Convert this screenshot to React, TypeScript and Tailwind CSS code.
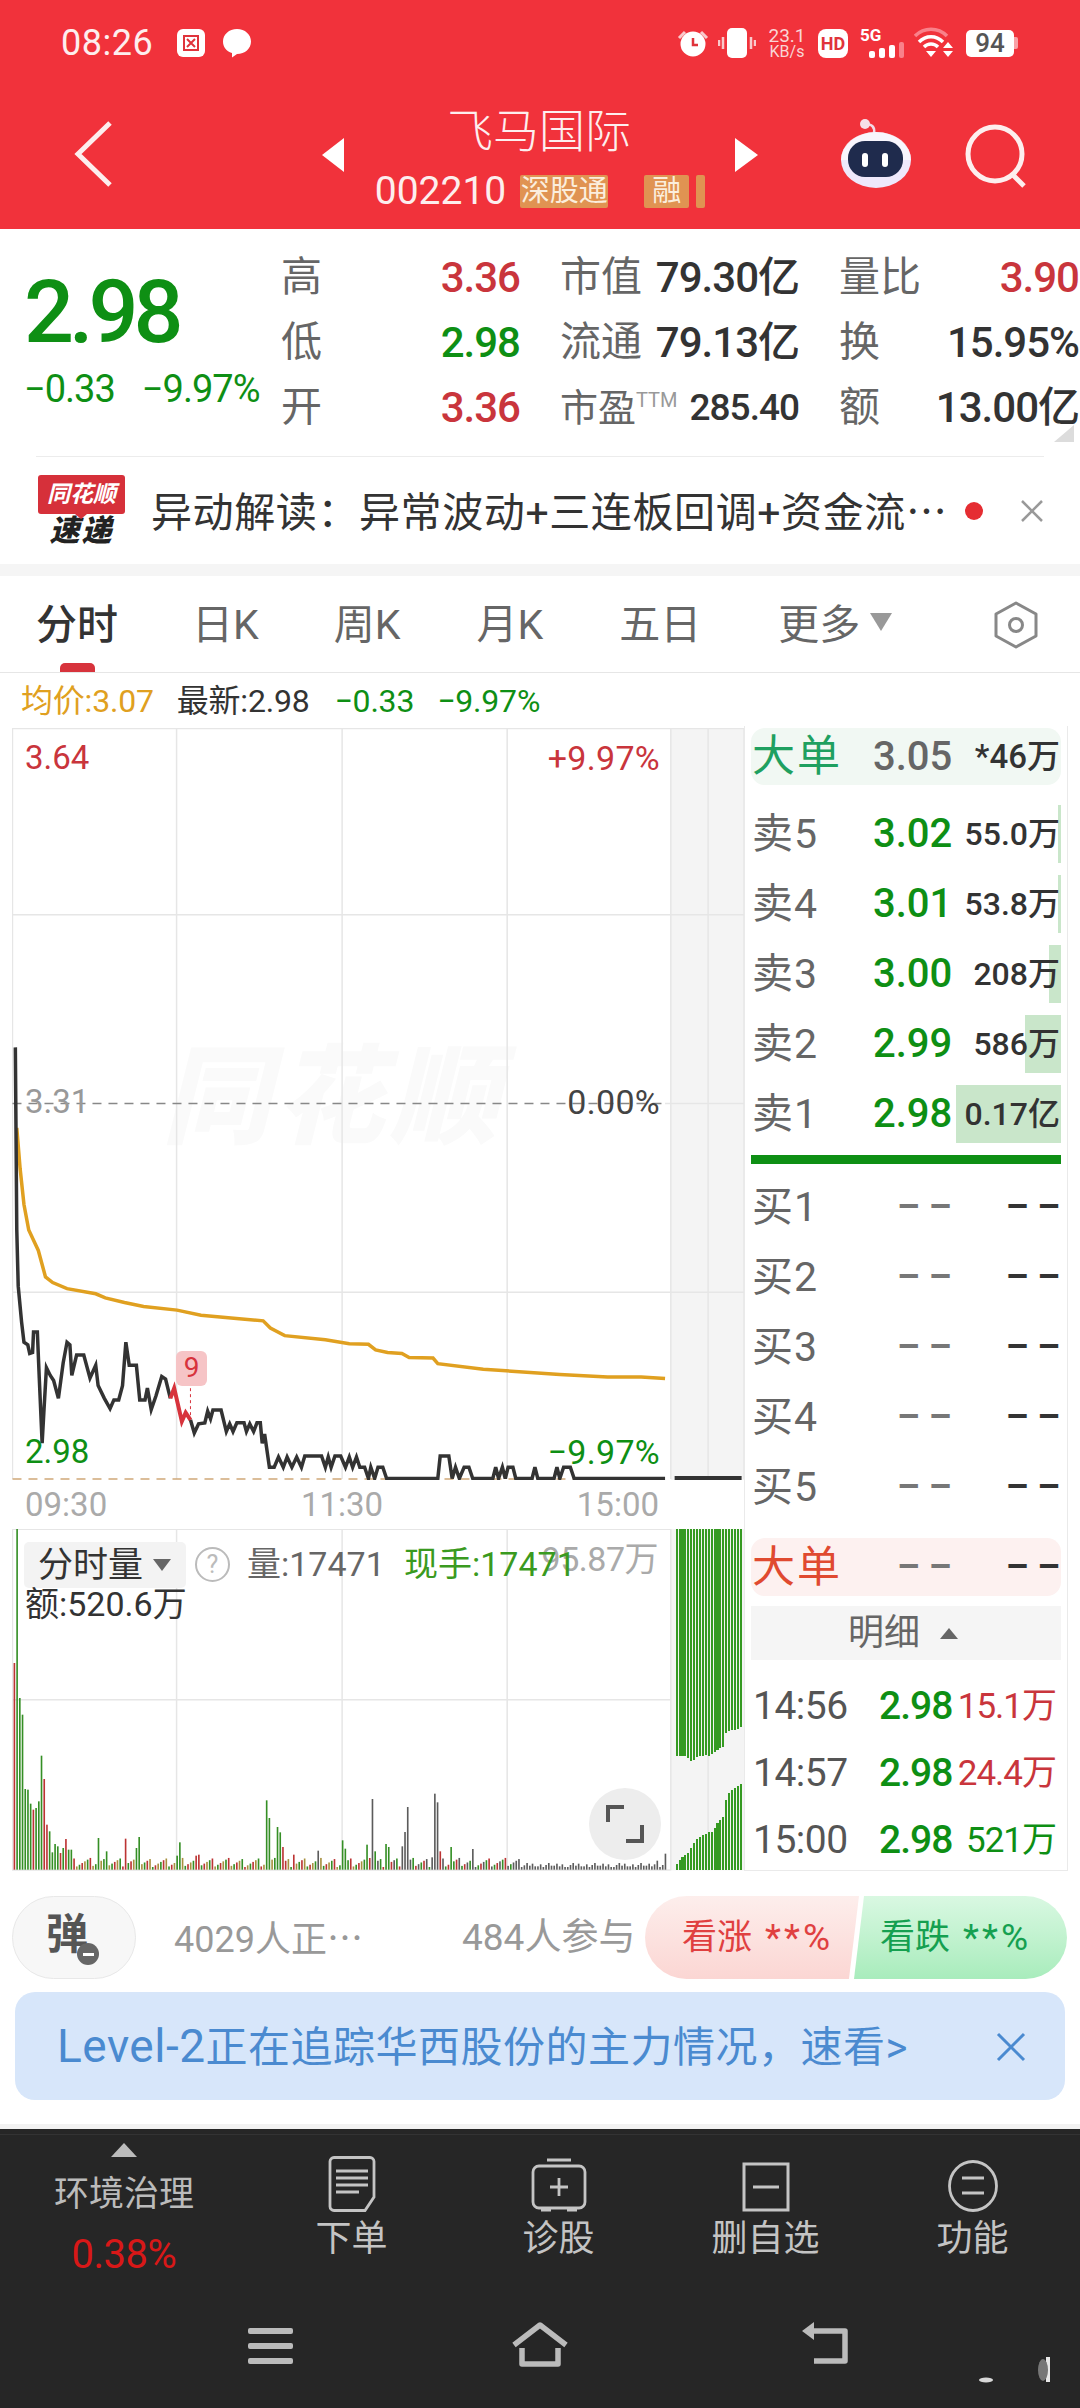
import React from 'react';

const GREEN = 'text-[#0e8f14]';
const RED = 'text-[#c9353c]';

const pricePts: number[][] = [[32,642],[35,1000],[38,1110],[45,1180],[50,1220],[58,1225],[62,1242],[68,1240],[70,1200],[78,1200],[82,1290],[88,1418],[92,1350],[97,1270],[105,1285],[112,1295],[122,1330],[132,1260],[140,1220],[146,1225],[150,1285],[160,1245],[175,1245],[188,1290],[200,1265],[205,1305],[218,1330],[230,1350],[238,1333],[248,1333],[256,1305],[263,1220],[270,1265],[285,1265],[292,1333],[303,1333],[308,1310],[316,1352],[326,1325],[338,1287],[346,1292],[356,1330]];
const redPts: number[][] = [[356,1330],[364,1310],[380,1375],[388,1358],[398,1372]];
const pricePts2: number[][] = [[398,1372],[406,1398],[415,1380],[428,1378],[434,1355],[440,1370],[445,1353],[462,1353],[473,1395],[480,1380],[487,1395],[495,1378],[510,1378],[515,1395],[522,1380],[530,1395],[537,1378],[544,1378],[548,1418],[553,1400],[563,1465],[573,1465],[582,1445],[592,1465],[600,1445],[610,1465],[620,1445],[630,1465],[637,1443],[672,1443],[680,1465],[686,1445],[692,1465],[700,1443],[712,1443],[722,1465],[730,1445],[737,1465],[745,1445],[752,1465],[762,1465],[770,1487],[775,1465],[783,1487],[790,1465],[800,1465],[808,1487],[915,1487],[920,1443],[938,1443],[945,1487],[952,1465],[960,1487],[970,1465],[980,1465],[988,1487],[1030,1487],[1036,1465],[1042,1487],[1050,1465],[1056,1487],[1062,1465],[1072,1465],[1078,1487],[1112,1487],[1118,1465],[1124,1487],[1158,1487],[1164,1465],[1170,1487],[1178,1465],[1192,1465],[1200,1487],[1390,1487]];
const avgPts: number[][] = [[35,800],[42,880],[50,950],[60,1000],[80,1040],[95,1092],[110,1103],[140,1115],[200,1125],[220,1133],[260,1142],[300,1150],[370,1157],[420,1167],[500,1174],[550,1178],[565,1192],[595,1207],[680,1215],[730,1223],[770,1224],[785,1235],[810,1240],[840,1242],[855,1250],[905,1251],[915,1262],[1010,1273],[1170,1283],[1270,1288],[1340,1288],[1390,1291]];

const pts = (p: number[][]) => p.map(([x, y]) => `${x},${y}`).join(' ');

const VG = '#358f25';
const VR = '#bc3434';
const VK = '#5c5c5c';

const spikes: [number, number, string][] = [[30,490,VR],[37,88,VG],[43,595,VG],[48,645,VG],[54,868,VG],[60,870,VG],[66,912,VG],[72,930,VR],[78,925,VG],[83,905,VG],[88,768,VG],[94,838,VR],[100,975,VR],[105,995,VG],[111,1058,VG],[117,1033,VG],[122,1040,VG],[128,1060,VR],[134,1045,VG],[139,1018,VR],[145,1050,VG],[150,1050,VG],[207,1015,VG],[222,1055,VG],[264,1017,VR],[287,1045,VG],[292,1012,VG],[372,1068,VG],[378,1028,VG],[410,1068,VR],[417,1065,VR],[558,902,VG],[564,955,VG],[580,982,VG],[586,998,VG],[592,1042,VR],[615,1065,VR],[667,1053,VK],[717,1022,VG],[723,1047,VG],[768,1035,VG],[774,1075,VR],[780,898,VK],[786,1055,VG],[808,1033,VG],[813,1042,VG],[842,1040,VK],[848,997,VK],[853,922,VK],[904,1073,VK],[910,882,VK],[915,908,VK],[921,1055,VR],[943,1042,VG],[989,1048,VK],[1373,1083,VK],[1390,1062,VK]];

const volumeBars = Array.from({ length: 241 }, (_, i) => {
    const x = 30 + i * 5.67;
    const seed = (i * 37) % 17;
    const h = x > 1100 ? 8 + (seed % 7) * 2 : 8 + seed * 1.7;
    const pick = (i * 7) % 3;
    const color = x > 1070 ? VK : pick === 0 ? VG : pick === 1 ? VR : x > 780 ? VK : '#a8903f';
    return { x, top: 1110 - h, color };
});
spikes.forEach(([x, top, color]) => {
    const i = Math.round((x - 30) / 5.67);
    volumeBars[i] = { x: volumeBars[i].x, top, color };
});

const sideTop = [770,768,768,770,775,785,780,772,770,768,767,770,762,757,752,745,742,700,695,692,690,688,683];
const sideBottom = [1092,1080,1072,1066,1060,1045,1030,1018,1012,1006,1002,998,996,985,970,960,952,900,880,872,866,858,852];

const Stat = ({ label, value, color = 'text-[#333]', labelClass = '' }: { label: React.ReactNode; value: string; color?: string; labelClass?: string }) => (
    <div className="flex items-center justify-between h-[65px]">
        <span className={`text-[41px] text-[#666] leading-none ${labelClass}`}>{label}</span>
        <span className={`text-[42px] font-medium tracking-[-1px] leading-none ${color}`}>{value}</span>
    </div>
);

const SellRow = ({ n, price, vol, bar }: { n: number; price: string; vol: string; bar: number }) => (
    <div className="relative flex items-center h-[70px]">
        <div className="absolute right-0 top-[6px] h-[58px] bg-[#c9e6ca]" style={{ width: bar }} />
        <span className="relative w-[122px] pl-[1px] text-[41px] tracking-[1px] text-[#666] leading-none">卖{n}</span>
        <span className={`relative text-[40px] font-medium leading-none ${GREEN}`}>{price}</span>
        <span className="relative ml-auto pr-[1px] text-[32px] font-medium text-[#333] leading-none">{vol}</span>
    </div>
);

const Dashes = ({ color }: { color: string }) => (
    <span className={`text-[36px] font-bold leading-none ${color}`}>– –</span>
);

const BuyRow = ({ n }: { n: number }) => (
    <div className="flex items-center h-[70px]">
        <span className="w-[146px] pl-[1px] text-[41px] tracking-[1px] text-[#666] leading-none">买{n}</span>
        <Dashes color="text-[#777]" />
        <span className="ml-auto pr-[1px]"><Dashes color="text-[#333]" /></span>
    </div>
);

const Tick = ({ time, vol, volColor }: { time: string; vol: string; volColor: string }) => (
    <div className="flex items-center h-[67px]">
        <span className="w-[128px] pl-[2px] text-[39px] text-[#555] leading-none tracking-[-0.5px]">{time}</span>
        <span className={`text-[39px] font-medium leading-none tracking-[-1px] ${GREEN}`}>2.98</span>
        <span className={`ml-auto pr-[5px] text-[35px] leading-none tracking-[-1px] ${volColor}`}>{vol}</span>
    </div>
);

const NavItem = ({ label, children }: { label: string; children: React.ReactNode }) => (
    <div className="w-[207px] flex flex-col items-center pt-[19px]">
        <div className="h-[58px] flex items-end justify-center">{children}</div>
        <span className="mt-[5px] text-[36px] text-[#c4c4c4] leading-[44px]">{label}</span>
    </div>
);

export default function App() {
    return (
        <div lang="zh-CN" className="w-[1080px] h-[2408px] overflow-hidden bg-white flex flex-col relative font-[Roboto,'Noto_Sans_CJK_SC',sans-serif]">
            {/* red header */}
            <div className="h-[229px] bg-[#f1323b] text-white shrink-0 flex flex-col">
                <div className="h-[84px] flex items-center pl-[61px] pr-[62px] pt-[2px]">
                    <span className="text-[36px] leading-none tracking-[0.5px] text-[#fdeeee]">08:26</span>
                    <svg width="28" height="28" viewBox="0 0 28 28" className="ml-[24px]">
                        <rect width="28" height="28" rx="6" fill="#fff" />
                        <path d="M7 7h14v14H7z M10 10l8 8M18 10l-8 8" stroke="#e0333b" strokeWidth="2" fill="none" />
                    </svg>
                    <svg width="30" height="30" viewBox="0 0 30 30" className="ml-[17px]">
                        <path d="M15 1c8 0 14 5.500 14 12.500S23 26 15 26l-5 3.500 0-4.500C4 23 1 19 1 13.500 1 6.500 7 1 15 1Z" fill="#fff" />
                    </svg>
                    <div className="ml-auto flex items-center">
                        <svg width="34" height="28" viewBox="0 0 34 28">
                            <circle cx="17" cy="15" r="12.500" fill="#fff" />
                            <path d="M17 9v7h5" stroke="#e0333b" strokeWidth="2.500" fill="none" />
                            <path d="M3 9l6-6M31 9l-6-6" stroke="#f9c9cb" strokeWidth="3" />
                        </svg>
                        <svg width="38" height="30" viewBox="0 0 38 30" className="ml-[8px]">
                            <rect x="9" y="0" width="20" height="30" rx="5" fill="#fff" />
                            <path d="M5 9v12M1 12v6M33 9v12M37 12v6" stroke="#f9c9cb" strokeWidth="2.500" />
                        </svg>
                        <div className="ml-[11px] w-[40px] flex flex-col items-center text-[#f9d5d6] font-[Roboto]">
                            <span className="text-[19px] leading-[17px]">23.1</span>
                            <span className="text-[16px] leading-[15px]">KB/s</span>
                        </div>
                        <div className="ml-[11px] w-[30px] h-[29px] rounded-[8px] bg-[#fff] text-[#e0333b] text-[18px] font-bold leading-[29px] text-center">HD</div>
                        <div className="relative ml-[12px] w-[44px] h-[30px]">
                            <span className="absolute left-0 top-[-2px] text-[17px] font-bold leading-[18px]">5G</span>
                            <svg width="36" height="16" viewBox="0 0 36 16" className="absolute left-[9px] bottom-0">
                                <rect x="0" y="9" width="6" height="7" rx="2" fill="#fff" />
                                <rect x="10" y="6" width="6" height="10" rx="2" fill="#fff" />
                                <rect x="20" y="3" width="6" height="13" rx="2" fill="#fff" />
                                <rect x="30" y="0" width="5" height="16" rx="2" fill="#f9818a" />
                            </svg>
                        </div>
                        <svg width="40" height="32" viewBox="0 0 40 32" className="ml-[10px]">
                            <path d="M1 9c9-9 23-9 32 0" stroke="#f9818a" strokeWidth="3.500" fill="none" />
                            <path d="M5 15c7-7 17-7 24 0M10 20c4-4 10-4 14 0" stroke="#fff" strokeWidth="3.500" fill="none" />
                            <path d="M17 30l-5-6h10zM34 15l5 6h-10zM34 30l5-6h-10z" fill="#fff" />
                        </svg>
                        <div className="relative ml-[12px] w-[48px] h-[27px] rounded-[5px] bg-white text-[#555] text-[26px] font-medium leading-[27px] text-center">94</div>
                        <div className="w-[4px] h-[12px] rounded-r-[2px] bg-[#f9a0a6]" />
                    </div>
                </div>
                <div className="relative flex-1">
                    <svg width="40" height="66" viewBox="0 0 40 66" className="absolute left-[74px] top-[37px]">
                        <path d="M36 2L4 33l32 31" stroke="#fdeeee" strokeWidth="5" fill="none" />
                    </svg>
                    <div className="absolute left-[322px] top-[54px] w-0 h-0 border-y-[17px] border-y-transparent border-r-[22px] border-r-white" />
                    <div className="absolute left-[735px] top-[54px] w-0 h-0 border-y-[17px] border-y-transparent border-l-[23px] border-l-white" />
                    <div className="flex flex-col items-center w-[1080px] pt-[20px]">
                        <span className="text-[46px] leading-[54px] font-light text-[#fdeeee] -ml-[2px]">飞马国际</span>
                        <div className="flex items-center mt-[16px] h-[34px] ml-[0px]">
                            <span className="text-[39px] leading-none tracking-[0px] text-[#fdeeee]">002210</span>
                            <span className="ml-[14px] w-[88px] h-[33px] rounded-[2px] bg-[#e09352] text-[29px] leading-[33px] text-center text-[#fbeedd]">深股通</span>
                            <span className="ml-[36px] w-[45px] h-[33px] rounded-[2px] bg-[#e09352] text-[29px] leading-[33px] text-center text-[#fbeedd]">融</span>
                            <span className="ml-[7px] w-[9px] h-[33px] rounded-[2px] bg-[#e09352]" />
                        </div>
                    </div>
                    {/* assistant robot */}
                    <svg width="76" height="72" viewBox="0 0 76 72" className="absolute left-[838px] top-[32px]">
                        <path d="M36 17c1-6-2-9-9-9" stroke="#f2d9e6" strokeWidth="2.500" fill="none" />
                        <circle cx="27" cy="8" r="5" fill="#f6dfe8" />
                        <ellipse cx="38" cy="44" rx="35" ry="28" fill="#eee8fb" />
                        <path d="M3 44c0-16 15-28 35-28s35 12 35 28" fill="#ffffff" opacity="0.6" />
                        <rect x="10" y="25" width="55" height="36" rx="17" fill="#1f2b4d" />
                        <rect x="24" y="37" width="6" height="14" rx="3" fill="#fff" />
                        <rect x="44" y="37" width="6" height="14" rx="3" fill="#fff" />
                    </svg>
                    <svg width="66" height="66" viewBox="0 0 66 66" className="absolute left-[962px] top-[39px]">
                        <circle cx="33" cy="31" r="27" stroke="#fdeeee" strokeWidth="5" fill="none" />
                        <path d="M50 51l12 12" stroke="#fdeeee" strokeWidth="5" />
                    </svg>
                </div>
            </div>

            {/* quote summary */}
            <div className="relative h-[227px] flex shrink-0 border-b-0">
                <div className="w-[281px] pl-[24px] pt-[39px]">
                    <div className={`text-[88px] font-medium leading-[88px] tracking-[-5px] ${GREEN}`}>2.98</div>
                    <div className={`mt-[15px] flex text-[38px] leading-[36px] tracking-[-1px] ${GREEN}`}>
                        <span>−0.33</span>
                        <span className="ml-[27px]">−9.97%</span>
                    </div>
                </div>
                <div className="w-[797px] pt-[16px] grid grid-cols-[239px_239px_240px] content-start gap-x-[40px]">
                    <Stat label="高" value="3.36" color={RED} />
                    <Stat label="市值" value="79.30亿" />
                    <Stat label="量比" value="3.90" color={RED} />
                    <Stat label="低" value="2.98" color={GREEN} />
                    <Stat label="流通" value="79.13亿" />
                    <Stat label="换" value="15.95%" />
                    <Stat label="开" value="3.36" color={RED} />
                    <div className="flex items-center justify-between h-[65px]">
                        <span className="text-[38px] text-[#666] leading-none">市盈<span className="text-[20px] align-super text-[#999]">TTM</span></span>
                        <span className="text-[37px] font-medium tracking-[-1px] leading-none text-[#333]">285.40</span>
                    </div>
                    <Stat label="额" value="13.00亿" />
                </div>
                <div className="absolute left-[1054px] top-[196px] w-0 h-0 border-b-[17px] border-b-[#dcdcdc] border-l-[20px] border-l-transparent" />
            </div>

            {/* news strip */}
            <div className="mx-[36px] h-px bg-[#ececec] shrink-0" />
            <div className="h-[107px] shrink-0 flex items-center pl-[38px]">
                <div className="w-[87px] h-[72px] flex flex-col items-center">
                    <div className="relative w-[87px] h-[39px] rounded-[3px] bg-[#d6303a] text-white text-[23px] font-bold italic leading-[39px] text-center">
                        同花顺
                        <div className="absolute left-[37px] top-[39px] w-0 h-0 border-x-[6px] border-x-transparent border-t-[5px] border-t-[#d6303a]" />
                    </div>
                    <span className="text-[30px] font-black italic leading-[34px] tracking-[2px] text-[#222]">速递</span>
                </div>
                <span className="ml-[26px] w-[814px] shrink-0 text-[41px] leading-[48px] tracking-[0.6px] text-[#333] whitespace-nowrap">异动解读：异常波动+三连板回调+资金流<span className="font-['Noto_Sans_CJK_SC'] tracking-normal">…</span></span>
                <span className="w-[18px] h-[18px] rounded-full bg-[#e52d32] shrink-0" />
                <svg width="24" height="24" viewBox="0 0 24 24" className="ml-[37px] shrink-0">
                    <path d="M2 2l20 20M22 2L2 22" stroke="#999" strokeWidth="2.500" />
                </svg>
            </div>
            <div className="h-[12px] bg-[#f5f5f5] shrink-0" />

            {/* period tabs */}
            <div className="relative h-[97px] shrink-0 flex items-center pl-[36px] pt-[2px] border-b border-[#e6e6e6] text-[41px] leading-none text-[#666]">
                <span className="font-medium text-[#333]">分时</span>
                <span className="ml-[74px]">日K</span>
                <span className="ml-[75px]">周K</span>
                <span className="ml-[76px]">月K</span>
                <span className="ml-[76px]">五日</span>
                <span className="ml-[77px]">更多</span>
                <span className="ml-[10px] w-0 h-0 border-x-[11px] border-x-transparent border-t-[18px] border-t-[#999] -mt-[6px]" />
                <svg width="48" height="48" viewBox="0 0 48 48" className="ml-[100px]">
                    <path d="M24 2L44 13V35L24 46L4 35V13Z" stroke="#888" strokeWidth="3" fill="none" strokeLinejoin="round" />
                    <circle cx="24" cy="24" r="6.500" stroke="#888" strokeWidth="3" fill="none" />
                </svg>
                <div className="absolute left-[60px] bottom-0 w-[35px] h-[9px] rounded-t-[5px] bg-[#d7333c]" />
            </div>

            {/* average / latest legend */}
            <div className="h-[55px] shrink-0 flex items-center pl-[21px] text-[32px] leading-none tracking-[-0.2px]">
                <span className="text-[#e0a020]">均价:3.07</span>
                <span className="ml-[23px] text-[#333]">最新:2.98</span>
                <span className={`ml-[25px] ${GREEN}`}>−0.33</span>
                <span className={`ml-[23px] ${GREEN}`}>−9.97%</span>
            </div>

            <div className="flex">
                <div className="w-[744px] pl-[12px]">
                    {/* intraday chart */}
                    <div className="relative w-[732px] h-[752px] text-[33px] leading-none">
                        <div className="absolute left-[150px] top-[316px] text-[108px] font-black italic leading-none tracking-[6px] text-[#fafafa]">同花顺</div>
                        <svg width="732" height="752" viewBox="25 16 1530 1474" preserveAspectRatio="none" className="absolute inset-0">
                            <rect x="1402" y="16" width="153" height="1474" fill="#f4f4f4" />
                            <g stroke="#e6e6e6" strokeWidth="1.500" vectorEffect="non-scaling-stroke" fill="none">
                                <path d="M26 16V1488M369 16V1488M715 16V1488M1060 16V1488M1402 16V1488M1480 16V1488M1555 16V1488" vectorEffect="non-scaling-stroke" />
                                <path d="M25 17H1555M25 382H1555M1390 752H1555M25 1122H1555" vectorEffect="non-scaling-stroke" />
                            </g>
                            <path d="M26 752H1392" stroke="#888" strokeWidth="1.500" strokeDasharray="9 7" vectorEffect="non-scaling-stroke" />
                            <path d="M26 1488H1392" stroke="#d0a878" strokeWidth="1.500" strokeDasharray="9 7" vectorEffect="non-scaling-stroke" />
                            <polyline points={pts(avgPts)} stroke="#e0a020" strokeWidth="3.500" fill="none" vectorEffect="non-scaling-stroke" />
                            <polyline points={pts(pricePts)} stroke="#333" strokeWidth="3.500" fill="none" vectorEffect="non-scaling-stroke" />
                            <polyline points={pts(pricePts2)} stroke="#333" strokeWidth="3.500" fill="none" vectorEffect="non-scaling-stroke" />
                            <polyline points={pts(redPts)} stroke="#d7333c" strokeWidth="4" fill="none" vectorEffect="non-scaling-stroke" />
                            <path d="M398 1310V1372" stroke="#d7333c" strokeWidth="1" strokeDasharray="3 3" vectorEffect="non-scaling-stroke" />
                            <path d="M1410 1488H1550" stroke="#333" strokeWidth="6" vectorEffect="non-scaling-stroke" />
                        </svg>
                        <span className={`absolute left-[13px] top-[13px] ${RED}`}>3.64</span>
                        <span className={`absolute right-[84px] top-[13px] text-[34px] tracking-[0.3px] ${RED}`}>+9.97%</span>
                        <span className="absolute left-[13px] top-[357px] text-[#999]">3.31</span>
                        <span className="absolute right-[84px] top-[357px] text-[34px] tracking-[0.3px] text-[#444]">0.00%</span>
                        <span className={`absolute left-[13px] top-[707px] ${GREEN}`}>2.98</span>
                        <span className={`absolute right-[84px] top-[707px] text-[34px] tracking-[0.3px] ${GREEN}`}>−9.97%</span>
                        <div className="absolute left-[164px] top-[623px] w-[31px] h-[35px] rounded-[6px] bg-[#f6c4c6] text-[28px] text-[#d7333c] leading-[33px] text-center">9</div>
                    </div>

                    <div className="h-[49px] flex items-center justify-between pl-[13px] pr-[85px] text-[33px] leading-none text-[#aaa]">
                        <span>09:30</span>
                        <span>11:30</span>
                        <span>15:00</span>
                    </div>

                    {/* volume chart */}
                    <div className="relative w-[732px] h-[342px]">
                        <svg width="732" height="342" viewBox="25 88 1530 1026" preserveAspectRatio="none" className="absolute inset-0">
                            <rect x="1402" y="88" width="153" height="1024" fill="#f4f4f4" />
                            <path d="M26 88V1112M369 88V1112M715 88V1112M1060 88V1112M1402 88V1112M1480 88V1112M25 89H1402M25 600H1402M25 1111H1402" stroke="#e6e6e6" strokeWidth="1.500" fill="none" vectorEffect="non-scaling-stroke" />
                            {volumeBars.map((b, i) => (
                                <rect key={i} x={b.x - 1.700} y={b.top} width="3.400" height={1110 - b.top} fill={b.color} />
                            ))}
                            {sideTop.map((bottom, i) => (
                                <rect key={i} x={1412 + i * 6.100} y="88" width="4.400" height={bottom - 88} fill="#359a22" shapeRendering="crispEdges" />
                            ))}
                            {sideBottom.map((top, i) => (
                                <rect key={i} x={1412 + i * 6.100} y={top} width="4.400" height={1110 - top} fill="#359a22" shapeRendering="crispEdges" />
                            ))}
                        </svg>
                        <span className="absolute right-[86px] top-[13px] text-[34px] leading-none tracking-[-0.5px] text-[#aaa]">95.87万</span>
                        <div className="absolute left-[12px] top-[13px] w-[162px] h-[46px] rounded-[5px] bg-[#f3f3f3] flex items-center pl-[14px]">
                            <span className="text-[35px] leading-none text-[#333]">分时量</span>
                            <span className="ml-[10px] w-0 h-0 border-x-[9px] border-x-transparent border-t-[12px] border-t-[#666]" />
                        </div>
                        <div className="absolute left-[183px] top-[18px] w-[35px] h-[35px] rounded-full border-2 border-[#bbb] text-[25px] text-[#bbb] leading-[31px] text-center">?</div>
                        <span className="absolute left-[235px] top-[18px] text-[34px] leading-none text-[#666]">量:17471</span>
                        <span className="absolute left-[392px] top-[18px] text-[34px] leading-none text-[#3a9a20]">现手:17471</span>
                        <span className="absolute left-[13px] top-[58px] text-[34px] leading-none text-[#333]">额:520.6万</span>
                        <div className="absolute left-[577px] top-[259px] w-[72px] h-[72px] rounded-full bg-[#ededed] flex items-center justify-center">
                            <svg width="38" height="38" viewBox="0 0 38 38">
                                <path d="M2 17V2H18M36 20V36H20" stroke="#555" strokeWidth="4" fill="none" />
                            </svg>
                        </div>
                    </div>
                </div>

                {/* order book */}
                <div className="w-[324px] h-[1145px] -mt-[2px] pt-[2px] px-[6px] border-x border-b border-[#eaeaea] overflow-hidden">
                    <div className="h-[57px] flex items-center rounded-[14px] bg-[#f1f8f3]">
                        <span className="w-[122px] pl-[1px] text-[43px] leading-none tracking-[2px] text-[#1fa060]">大单</span>
                        <span className="text-[40px] font-medium leading-none text-[#666]">3.05</span>
                        <span className="ml-auto pr-[1px] text-[33px] font-medium leading-none text-[#333]">*46万</span>
                    </div>
                    <div className="mt-[14px]">
                        <SellRow n={5} price="3.02" vol="55.0万" bar={3} />
                        <SellRow n={4} price="3.01" vol="53.8万" bar={3} />
                        <SellRow n={3} price="3.00" vol="208万" bar={12} />
                        <SellRow n={2} price="2.99" vol="586万" bar={36} />
                        <SellRow n={1} price="2.98" vol="0.17亿" bar={105} />
                    </div>
                    <div className="mt-[6px] h-[9px] bg-[#0e8f14]" />
                    <div className="mt-[8px]">
                        <BuyRow n={1} />
                        <BuyRow n={2} />
                        <BuyRow n={3} />
                        <BuyRow n={4} />
                        <BuyRow n={5} />
                    </div>
                    <div className="mt-[16px] h-[58px] flex items-center rounded-[14px] bg-[#fdf1f0]">
                        <span className="w-[146px] pl-[1px] text-[43px] leading-none tracking-[2px] text-[#e04a30]">大单</span>
                        <Dashes color="text-[#777]" />
                        <span className="ml-auto pr-[1px]"><Dashes color="text-[#333]" /></span>
                    </div>
                    <div className="mt-[10px] h-[54px] flex items-center justify-center pr-[6px] bg-[#f5f5f5]">
                        <span className="text-[36px] leading-none text-[#666]">明细</span>
                        <span className="ml-[20px] w-0 h-0 border-x-[9px] border-x-transparent border-b-[11px] border-b-[#666]" />
                    </div>
                    <div className="mt-[13px]">
                        <Tick time="14:56" vol="15.1万" volColor="text-[#c9353c]" />
                        <Tick time="14:57" vol="24.4万" volColor="text-[#c9353c]" />
                        <Tick time="15:00" vol="521万" volColor={GREEN} />
                    </div>
                </div>
            </div>

            {/* comment + bull/bear row */}
            <div className="mt-[25px] h-[83px] shrink-0 flex items-center pl-[12px]">
                <div className="relative w-[124px] h-[83px] rounded-full border border-[#e8e8e8] bg-[#f7f7f7] flex items-center justify-center">
                    <span className="text-[42px] font-bold leading-none text-[#555] -ml-[14px] -mt-[6px]">弹</span>
                    <span className="absolute left-[64px] top-[46px] w-[22px] h-[22px] rounded-full bg-[#666] flex items-center justify-center">
                        <span className="w-[11px] h-[3px] bg-white" />
                    </span>
                </div>
                <span className="ml-[38px] w-[288px] shrink-0 text-[36px] leading-[44px] text-[#999]">4029人正<span className="font-['Noto_Sans_CJK_SC']">…</span></span>
                <span className="w-[183px] shrink-0 text-[37px] leading-none text-[#999]">484人参与</span>
                <div className="relative w-[422px] h-[83px]">
                    <div className="absolute left-0 top-0 w-[214px] h-[83px] rounded-l-[42px] bg-gradient-to-b from-[#fdeeec] to-[#fbd6d3] [clip-path:polygon(0_0,100%_0,95.300%_100%,0_100%)] flex items-center pl-[37px] text-[35px] leading-none text-[#e04040]">看涨<span className="ml-[13px] text-[37px] tracking-[3px]">**%</span></div>
                    <div className="absolute left-[209px] top-0 w-[213px] h-[83px] rounded-r-[42px] bg-gradient-to-b from-[#d9f8e2] to-[#a8ecbc] [clip-path:polygon(4.700%_0,100%_0,100%_100%,0_100%)] flex items-center pl-[26px] text-[35px] leading-none text-[#15a050]">看跌<span className="ml-[13px] text-[37px] tracking-[3px]">**%</span></div>
                </div>
            </div>

            {/* level-2 banner */}
            <div className="mt-[13px] mx-[15px] h-[108px] shrink-0 rounded-[20px] bg-[#d7e6fa] flex items-center pl-[42px] text-[#4a8ad0]">
                <span className="text-[42px] leading-none tracking-[0.5px] whitespace-nowrap"><span className="text-[46px]">Level-2</span>正在追踪华西股份的主力情况，速看&gt;</span>
                <svg width="30" height="30" viewBox="0 0 30 30" className="absolute left-[996px] top-[2032px]">
                    <path d="M2 2l26 26M28 2L2 28" stroke="#4a8ad0" strokeWidth="3" />
                </svg>
            </div>

            <div className="mt-[24px] h-[5px] bg-[#f2f2f2] shrink-0" />

            {/* bottom bars */}
            <div className="relative flex-1 bg-[#262626] border-t-[0px]">
                <div className="h-px mt-[5px] bg-[#333]" />
                <div className="flex">
                    <div className="w-[248px] flex flex-col items-center pt-[8px] pr-[0px]">
                        <span className="w-0 h-0 border-x-[13px] border-x-transparent border-b-[14px] border-b-[#bbb]" />
                        <span className="mt-[18px] text-[35px] leading-[40px] text-[#bbb]">环境治理</span>
                        <span className="mt-[20px] text-[40px] leading-[40px] tracking-[-0.5px] text-[#d81818]">0.38%</span>
                    </div>
                    <NavItem label="下单">
                        <svg width="48" height="56" viewBox="0 0 48 56">
                            <path d="M6 1.500H42a4 4 0 0 1 4 4V41L37 54.500H6a4 4 0 0 1-4-4V5.500a4 4 0 0 1 4-4Z M8 15H40M8 22H40M8 29H40M8 36H31" stroke="#c4c4c4" strokeWidth="2.800" fill="none" />
                        </svg>
                    </NavItem>
                    <NavItem label="诊股">
                        <svg width="56" height="54" viewBox="0 0 56 54">
                            <path d="M16 2H40M8 8H48a6 6 0 0 1 6 6V44a6 6 0 0 1-6 6H8a6 6 0 0 1-6-6V14a6 6 0 0 1 6-6Z M28 20V38M19 29H37M10 52H20M36 52H46" stroke="#c4c4c4" strokeWidth="2.800" fill="none" />
                        </svg>
                    </NavItem>
                    <NavItem label="删自选">
                        <svg width="48" height="50" viewBox="0 0 48 50">
                            <path d="M2 2H46V48H2Z M11 25H37" stroke="#c4c4c4" strokeWidth="3" fill="none" />
                        </svg>
                    </NavItem>
                    <NavItem label="功能">
                        <svg width="50" height="52" viewBox="0 0 50 52">
                            <ellipse cx="25" cy="26" rx="23.500" ry="24.500" stroke="#c4c4c4" strokeWidth="2.800" fill="none" />
                            <path d="M14 18H36M14 33H36" stroke="#c4c4c4" strokeWidth="2.800" />
                        </svg>
                    </NavItem>
                </div>
                <div className="absolute left-[248px] top-[192px] flex items-start">
                    <div className="w-[45px] flex flex-col gap-[9px] mt-[7px]">
                        <div className="h-[6px] rounded-[2px] bg-[#bbb]" />
                        <div className="h-[6px] rounded-[2px] bg-[#bbb]" />
                        <div className="h-[6px] rounded-[2px] bg-[#bbb]" />
                    </div>
                    <svg width="58" height="46" viewBox="0 0 58 46" className="ml-[218px]">
                        <path d="M3 24L29 4l26 20M11 27V43H47V27" stroke="#bbb" strokeWidth="5.500" fill="none" strokeLinejoin="round" />
                    </svg>
                    <svg width="50" height="44" viewBox="0 0 50 44" className="ml-[231px]">
                        <path d="M12 10H45V40H14" stroke="#bbb" strokeWidth="5.500" fill="none" strokeLinejoin="round" />
                        <path d="M14 1V19L2 10Z" fill="#bbb" />
                    </svg>
                </div>
                <svg width="140" height="32" viewBox="0 0 140 32" className="absolute left-[916px] top-[224px]">
                    <ellipse cx="70" cy="27" rx="7" ry="2.500" fill="#d8d8d8" />
                    <path d="M132 4V29" stroke="#e8e8e8" strokeWidth="4" />
                    <ellipse cx="127" cy="17" rx="5" ry="11" fill="#777" />
                </svg>
            </div>
        </div>
    );
}
